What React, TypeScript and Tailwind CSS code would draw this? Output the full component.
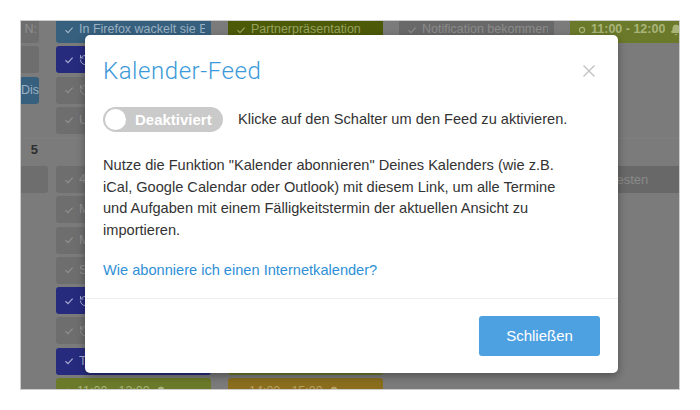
import React from "react";
import { RotateCcw, Bell } from "lucide-react";

function Check({ c }: { c: string }) {
  return (
    <svg width="10" height="10" viewBox="0 0 10 10" className="shrink-0">
      <polyline points="1.5,5.2 4,7.6 8.6,2.6" fill="none" stroke={c} strokeWidth="1.2" />
    </svg>
  );
}

function Ring({ c }: { c: string }) {
  return (
    <svg width="8" height="8" viewBox="0 0 8 8" className="shrink-0">
      <circle cx="4" cy="4" r="2.6" fill="none" stroke={c} strokeWidth="1.2" />
    </svg>
  );
}

type EvProps = {
  bg: string;
  fg: string;
  text?: string;
  rot?: boolean;
  ring?: boolean;
  bell?: boolean;
  bold?: boolean;
};

function Ev({ bg, fg, text, rot, ring, bell, bold }: EvProps) {
  return (
    <div
      className={`h-[27px] shrink-0 rounded-[3px] flex items-center gap-[5px] pl-[8px] pr-[6px] overflow-hidden whitespace-nowrap text-[12.5px] ${bold ? "font-bold" : ""}`}
      style={{ background: bg, color: fg }}
    >
      {ring ? <Ring c={fg} /> : <Check c={fg} />}
      {rot && <RotateCcw size={12} strokeWidth={2} color={fg} className="shrink-0" />}
      <span className="overflow-hidden">{text}</span>
      {bell && <Bell size={12} fill={fg} color={fg} className="shrink-0" />}
    </div>
  );
}

const G = { bg: "#6e6e6e", fg: "#8f8f8f" };
const TEAL = { bg: "#36607e", fg: "#9cb1c2" };
const IND = { bg: "#272b7e", fg: "#a6a9d2" };
const OLIVE = { bg: "#6b7a2a", fg: "#a8b47a" };

function Calendar() {
  return (
    <div className="flex flex-col -mt-[5px]">
      {/* week row 1 */}
      <div className="flex h-[122px] shrink-0">
        <div className="w-[27px] shrink-0 flex flex-col gap-[3.3px]">
          <div className="w-[18px] h-[27px] rounded-r-[3px] bg-[#6e6e6e] flex items-center justify-end text-[12.5px] text-[#8f8f8f] overflow-hidden pr-[2px]">
            N:
          </div>
          <div className="w-[18px] h-[27px] rounded-r-[3px] bg-[#6e6e6e]" />
          <div className="w-[18px] h-[27px] rounded-r-[3px] bg-[#36607e] flex items-center text-[12.5px] text-[#9cb1c2] overflow-hidden">
            Dis
          </div>
        </div>
        <div className="w-[155px] shrink-0 ml-[8px] flex flex-col gap-[3.3px]">
          <Ev {...TEAL} text="In Firefox wackelt sie Einiges" />
          <Ev {...IND} rot text="Termin" />
          <Ev {...G} rot text="Termin" />
          <Ev {...G} text="Update" />
        </div>
        <div className="w-[155px] shrink-0 ml-[17px] flex flex-col gap-[3.3px]">
          <Ev bg="#4c5a08" fg="#97a25f" text="Partnerpräsentation" />
          <Ev {...G} text="Meeting" />
          <Ev {...G} text="Meeting" />
        </div>
        <div className="w-[155px] shrink-0 ml-[16px] flex flex-col gap-[3.3px]">
          <Ev bg="#696969" fg="#8c8c8c" text="Notification bekommen" />
        </div>
        <div className="w-[155px] shrink-0 ml-[16px] flex flex-col gap-[3.3px]">
          <div className="w-[150px]">
            <Ev {...OLIVE} ring bold text="11:00 - 12:00" bell />
          </div>
        </div>
      </div>
      {/* week row 2 */}
      <div className="flex border-t border-[#7f7f7f]">
        <div className="w-[27px] shrink-0 flex flex-col">
          <div className="h-[27px] flex items-end justify-end pr-[10px] pb-[7px] text-[13px] font-bold text-[#2e2e2e]">
            5
          </div>
          <div className="h-[27px] rounded-r-[3px] bg-[#6e6e6e]" />
        </div>
        <div className="w-[155px] shrink-0 ml-[8px] flex flex-col gap-[3.3px] pt-[27px]">
          <Ev {...G} text="40 Stunden" />
          <Ev {...G} text="Meeting" />
          <Ev {...G} text="Meeting" />
          <Ev {...G} text="Status" />
          <Ev {...IND} rot text="Termin" />
          <Ev {...G} rot text="Termin" />
          <Ev {...IND} text="To do" />
          <Ev {...OLIVE} ring text="11:00 - 12:00" bell />
        </div>
        <div className="w-[155px] shrink-0 ml-[17px] flex flex-col gap-[3.3px] pt-[27px]">
          <Ev {...G} text="Meeting" />
          <Ev {...G} text="Meeting" />
          <Ev {...G} text="Meeting" />
          <Ev {...G} text="Meeting" />
          <Ev {...G} text="Meeting" />
          <Ev {...G} text="Meeting" />
          <Ev {...OLIVE} text="Review" />
          <Ev bg="#8a6e1e" fg="#b8a064" ring text="14:00 - 15:00" bell />
        </div>
        <div className="w-[155px] shrink-0 ml-[16px] flex flex-col gap-[3.3px] pt-[27px]">
          <div className="h-[27px] ml-[60px] -mr-[16px] rounded-l-[3px] bg-[#686868]" />
        </div>
        <div className="w-[109px] shrink-0 ml-[16px] flex flex-col gap-[3.3px] pt-[27px]">
          <div className="h-[27px] bg-[#686868] flex items-center text-[13px] text-[#8a8a8a] whitespace-nowrap">
            <span className="ml-[40px]">Testen</span>
          </div>
        </div>
      </div>
    </div>
  );
}

function Modal() {
  return (
    <div className="absolute left-[64px] top-[14px] w-[533px] bg-white rounded-[5px] shadow-[0_3px_9px_rgba(0,0,0,0.35)] text-[#333333]">
      <div className="flex items-center justify-between pt-[22px] pl-[18px] pr-[23px]">
        <h4 className="text-[24px] leading-[28px] font-light tracking-[0.55px] text-[#3b99d9] font-['Roboto',sans-serif]">
          Kalender-Feed
        </h4>
        <svg width="12" height="12" viewBox="0 0 12 12">
          <path d="M0.5 0.5 L11.5 11.5 M11.5 0.5 L0.5 11.5" stroke="#c2c2c2" strokeWidth="1.4" />
        </svg>
      </div>
      <div className="px-[18px] pb-[16.5px] border-b border-[#ececec]">
        <div className="flex items-center mt-[22px]">
          <div className="w-[120px] h-[25px] rounded-full bg-[#cacaca] flex items-center pl-[2px]">
            <div className="w-[21px] h-[21px] rounded-full bg-white" />
            <span className="ml-[9px] text-[15px] font-bold text-white leading-none">Deaktiviert</span>
          </div>
          <span className="ml-[15px] text-[14.6px]">Klicke auf den Schalter um den Feed zu aktivieren.</span>
        </div>
        <p className="mt-[23px] text-[14.6px] leading-[21.5px] whitespace-nowrap">
          Nutze die Funktion "Kalender abonnieren" Deines Kalenders (wie z.B.
          <br />
          iCal, Google Calendar oder Outlook) mit diesem Link, um alle Termine
          <br />
          und Aufgaben mit einem Fälligkeitstermin der aktuellen Ansicht zu
          <br />
          importieren.
        </p>
        <p className="mt-[19px] text-[14.6px] leading-[21.5px] text-[#2f8fd6]">
          Wie abonniere ich einen Internetkalender?
        </p>
      </div>
      <div className="flex justify-end pt-[17px] pb-[17px] pr-[18px]">
        <div className="w-[121px] h-[40px] rounded-[3px] bg-[#4ea1e1] text-white text-[15px] flex items-center justify-center">
          Schließen
        </div>
      </div>
    </div>
  );
}

export default function App() {
  return (
    <div className="w-[700px] h-[410px] bg-white p-[20px] font-['Liberation_Sans',Arial,sans-serif]">
      <div className="relative w-[660px] h-[370px] overflow-hidden bg-[#7b7b7b] border border-[#cdcdcd]">
        <Calendar />
        <Modal />
      </div>
    </div>
  );
}
